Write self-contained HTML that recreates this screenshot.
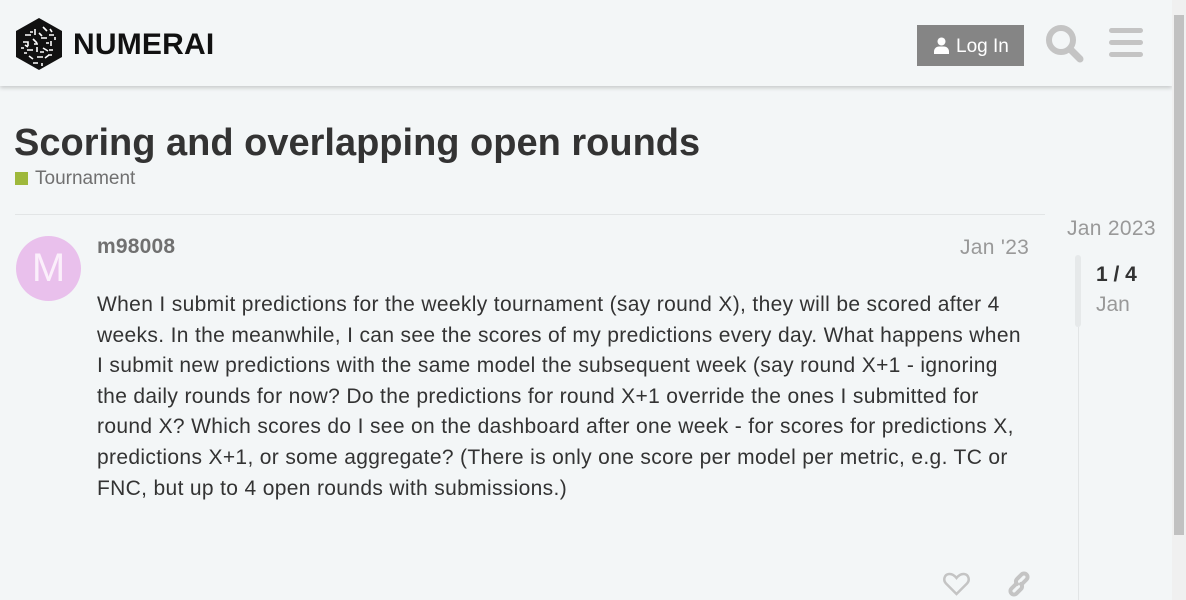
<!DOCTYPE html>
<html><head><meta charset="utf-8"><style>
*{margin:0;padding:0;box-sizing:border-box}
body{width:1186px;height:600px;overflow:hidden;background:#f3f6f7;font-family:"Liberation Sans",sans-serif;position:relative;color:#333}
.hdr{position:absolute;left:0;top:0;width:1172px;height:86px;background:#f3f6f7;box-shadow:0 2px 4px rgba(0,0,0,.18)}
.sb{position:absolute;left:1172px;top:0;width:14px;height:600px;background:#f0f0f0}
.thumb{position:absolute;left:1174px;top:15px;width:10px;height:520px;background:#c1c1c1}
.a{position:absolute;white-space:nowrap}
</style></head><body>
<div class="hdr">
<svg class="a" style="left:15px;top:17px" width="48" height="54" viewBox="0 0 48 54">
<polygon points="24,1 47,14 47,40 24,53 1,40 1,14" fill="#111"/>
<g stroke="#fff" stroke-width="1.6" fill="none">
<path d="M10 18h6M20 12v6M28 10l4 4M34 18h5M8 25h5v4M18 22l4 4M26 21h6M36 24v5M12 33h6M22 30v5M28 31l5 3M38 33h-4M14 39l4 3M22 40h6M30 41l4 -3M18 46h5M27 46v3M10 28l3 2M31 26l3 0M15 15h3M24 16l3 3M40 20v3M6 31h3M19 27h4M33 38h4M25 35h4M9 36l3 0M35 12l2 3"/>
</g></svg>
<div class="a" style="left:73px;top:28px;font-size:30px;font-weight:bold;letter-spacing:0.2px;color:#111">NUMERAI</div>
<div class="a" style="left:917px;top:25px;width:107px;height:41px;background:#858585;color:#fff;font-size:19px;line-height:41px">
<svg class="a" style="left:16px;top:12px" width="17" height="17" viewBox="0 0 17 17"><circle cx="8.5" cy="4.5" r="4" fill="#fff"/><path d="M1 17v-2.5c0-3 2.5-5 5-5h5c2.5 0 5 2 5 5V17z" fill="#fff"/></svg>
<span class="a" style="left:39px;top:1px">Log In</span></div>
<svg class="a" style="left:1045px;top:24px" width="40" height="40" viewBox="0 0 40 40"><circle cx="16" cy="16" r="12" stroke="#c4c4c4" stroke-width="6" fill="none"/><path d="M25 25l10 10" stroke="#c4c4c4" stroke-width="7" stroke-linecap="round"/></svg>
<svg class="a" style="left:1108px;top:27px" width="36" height="32"><rect x="1" y="1" width="34" height="5" rx="2.5" fill="#c4c4c4"/><rect x="1" y="13" width="34" height="5" rx="2.5" fill="#c4c4c4"/><rect x="1" y="25" width="34" height="5" rx="2.5" fill="#c4c4c4"/></svg>
</div>
<div class="sb"></div><div class="thumb"></div>
<div class="a" style="left:14px;top:122px;font-size:38px;font-weight:bold;color:#333">Scoring and overlapping open rounds</div>
<div class="a" style="left:15px;top:172px;width:13px;height:13px;background:#9eb83b"></div>
<div class="a" style="left:35px;top:168px;font-size:19px;color:#707070">Tournament</div>
<div class="a" style="left:15px;top:214px;width:1030px;height:1px;background:#e2e5e6"></div>
<div class="a" style="left:16px;top:236px;width:65px;height:65px;border-radius:50%;background:#e9c0ec;color:#fbeffb;font-size:40px;line-height:65px;text-align:center">M</div>
<div class="a" style="left:97px;top:235px;font-size:21px;font-weight:bold;color:#707070;letter-spacing:0.2px">m98008</div>
<div class="a" style="left:960px;top:236px;font-size:21px;color:#999;letter-spacing:0.3px">Jan '23</div>
<div class="a" style="left:97px;top:290px;font-size:21px;line-height:30.6px;color:#333;letter-spacing:0.34px">When I submit predictions for the weekly tournament (say round X), they will be scored after 4<br>weeks. In the meanwhile, I can see the scores of my predictions every day. What happens when<br>I submit new predictions with the same model the subsequent week (say round X+1 - ignoring<br>the daily rounds for now? Do the predictions for round X+1 override the ones I submitted for<br>round X? Which scores do I see on the dashboard after one week - for scores for predictions X,<br>predictions X+1, or some aggregate? (There is only one score per model per metric, e.g. TC or<br>FNC, but up to 4 open rounds with submissions.)</div>
<svg class="a" style="left:943px;top:571px" width="27" height="25" viewBox="0 0 27 25"><path d="M13.5 23L3 12.5C0 9.5 1 3.5 6 3c3-.3 5.5 1.5 7.5 4C15.5 4.5 18 2.7 21 3c5 .5 6 6.5 3 9.5z" stroke="#c4c4c4" stroke-width="2.5" fill="none"/></svg>
<svg class="a" style="left:1005px;top:570px" width="28" height="28" viewBox="0 0 28 28"><g stroke="#c4c4c4" stroke-width="4" fill="none" stroke-linecap="round"><path d="M11 14l-4.5 4.5a3.5 3.5 0 0 0 5 5l4.5-4.5a3.5 3.5 0 0 0 0-5"/><path d="M17 14l4.5-4.5a3.5 3.5 0 0 0-5-5L12 9a3.5 3.5 0 0 0 0 5"/></g></svg>
<div class="a" style="left:1067px;top:217px;font-size:21px;color:#999;letter-spacing:0.3px">Jan 2023</div>
<div class="a" style="left:1075px;top:255px;width:6px;height:72px;border-radius:3px;background:#e6e9ea"></div>
<div class="a" style="left:1078px;top:327px;width:1px;height:273px;background:#e2e5e6"></div>
<div class="a" style="left:1096px;top:263px;font-size:21px;font-weight:bold;color:#333">1 / 4</div>
<div class="a" style="left:1096px;top:293px;font-size:21px;color:#999">Jan</div>
</body></html>
